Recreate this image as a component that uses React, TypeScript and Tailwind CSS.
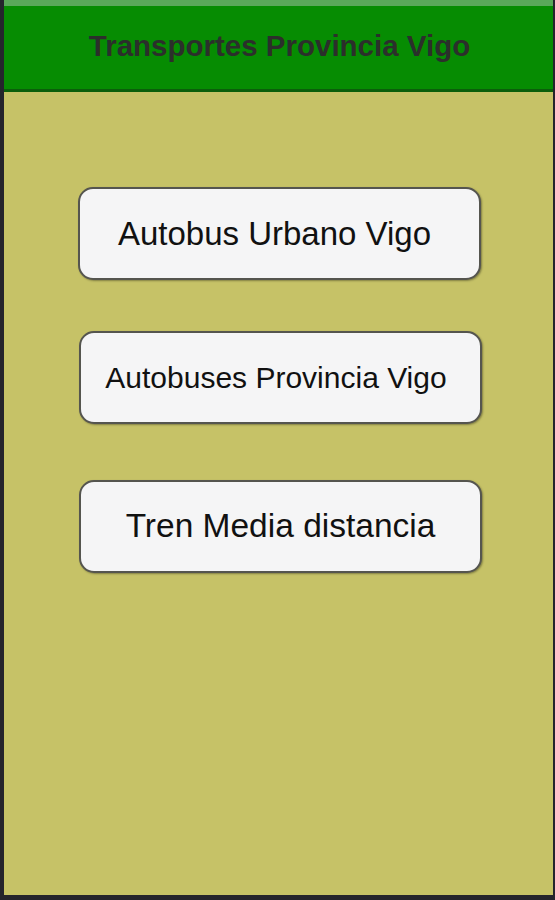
import React from 'react';

const ITEMS = [
  { label: 'Autobus Urbano Vigo', text: 'text-[33px]', pad: 'pr-[10px]', mt: 'mt-[95px]', ml: 'ml-[74px]' },
  { label: 'Autobuses Provincia Vigo', text: 'text-[30px]', pad: 'pr-[9px]', mt: 'mt-[51px]', ml: 'ml-[75px]' },
  { label: 'Tren Media distancia', text: 'text-[33.5px]', pad: 'pl-[0px]', mt: 'mt-[56px]', ml: 'ml-[75px]' },
];

export default function App() {
  return (
    <div className="w-[555px] h-[900px] bg-[#24242c] pl-[4px] pr-[2px] pb-[5px] flex flex-col" style={{ fontFamily: '"Liberation Sans", Arial, sans-serif' }}>
      <div className="h-[6px] bg-[#5aa85a]" />
      <header className="h-[86px] bg-[#068c02] border-b-[3px] border-[#0b5e0b] flex items-center justify-center">
        <h1 className="text-[29.5px] font-bold text-[#2b2f2b] pl-[2px] pb-[2px]">Transportes Provincia Vigo</h1>
      </header>
      <main className="flex-1 bg-[#c6c267] flex flex-col">
        {ITEMS.map(item => (
          <button
            key={item.label}
            className={`${item.mt} ${item.ml} w-[403px] h-[93px] rounded-[15px] border-2 border-[#55554f] bg-[#f5f5f6] shadow-[1px_1px_2px_rgba(0,0,0,0.35)] flex items-center justify-center text-[#111] ${item.text} ${item.pad}`}
          >
            {item.label}
          </button>
        ))}
      </main>
    </div>
  );
}
